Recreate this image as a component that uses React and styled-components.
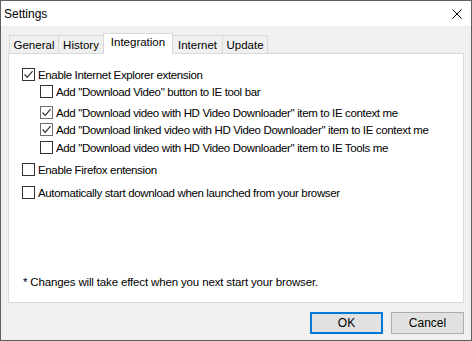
import React, { useState } from "react";
import styled, { createGlobalStyle } from "styled-components";

const GlobalStyle = createGlobalStyle`
  html, body {
    margin: 0;
    padding: 0;
    background: #f0f0f0;
  }
  * {
    box-sizing: border-box;
  }
`;

const Window = styled.div`
  width: 472px;
  height: 341px;
  border: 1px solid #5f5f5f;
  display: flex;
  flex-direction: column;
  font-family: "Liberation Sans", Arial, sans-serif;
  font-size: 11.5px;
  letter-spacing: -0.35px;
  color: #000;
  background: #f0f0f0;
`;

const TitleBar = styled.div`
  height: 25px;
  background: #fff;
  display: flex;
  align-items: center;
  justify-content: space-between;
  padding: 0 9px 0 3px;
  font-size: 12px;
  letter-spacing: 0;
`;

const Body = styled.div`
  flex: 1;
  display: flex;
  flex-direction: column;
  padding: 7px 7px 0 7px;
`;

const TabRow = styled.div`
  display: flex;
  align-items: flex-end;
  height: 20px;
  padding-left: 1px;
  position: relative;
  z-index: 1;
`;

const Tab = styled.div`
  width: ${(p) => p.$w}px;
  height: ${(p) => (p.$active ? 21 : 18)}px;
  margin-left: -1px;
  margin-bottom: ${(p) => (p.$active ? -1 : 0)}px;
  border: 1px solid #d9d9d9;
  border-bottom: none;
  background: ${(p) => (p.$active ? "#fff" : "#f0f0f0")};
  display: flex;
  align-items: ${(p) => (p.$active ? "flex-start" : "center")};
  padding-top: ${(p) => (p.$active ? 2 : 0)}px;
  justify-content: center;
  letter-spacing: 0;
  cursor: default;
  &:first-child {
    margin-left: 0;
  }
`;

const Panel = styled.div`
  height: 250px;
  background: #fff;
  border: 1px solid #d9d9d9;
  display: flex;
  flex-direction: column;
  padding: 12px 13px 12px 13px;
`;

const Row = styled.label`
  display: flex;
  align-items: center;
  height: 17px;
  margin-top: ${(p) => p.$gap || 0}px;
  padding-left: ${(p) => (p.$sub ? 18 : 0)}px;
  white-space: nowrap;
`;

const Box = styled.span`
  width: 13px;
  height: 13px;
  border: 1px solid ${(p) => (p.$soft ? "#6e6e6e" : "#333")};
  background: #fff;
  margin-right: 3px;
  display: flex;
  align-items: center;
  justify-content: center;
  flex-shrink: 0;
`;

const Note = styled.div`
  margin-top: auto;
  height: 17px;
  display: flex;
  align-items: center;
  padding-left: 1px;
  letter-spacing: -0.15px;
`;

const Footer = styled.div`
  display: flex;
  justify-content: flex-end;
  gap: 8px;
  padding-top: 9px;
`;

const Button = styled.button`
  width: ${(p) => p.$w}px;
  height: 22px;
  background: #e1e1e1;
  border: ${(p) => (p.$primary ? "2px solid #0078d7" : "1px solid #adadad")};
  font-family: inherit;
  font-size: 12px;
  color: #000;
  padding: 0;
`;

const Check = ({ checked, soft }) => (
  <Box $soft={soft}>
    {checked && (
      <svg width="11" height="11" viewBox="0 0 11 11">
        <path d="M1.5 5.5 L4.2 8.3 L9.6 2.2" fill="none" stroke="#333" strokeWidth="1.2" />
      </svg>
    )}
  </Box>
);

const tabs = [
  { name: "General", w: 50 },
  { name: "History", w: 46 },
  { name: "Integration", w: 70 },
  { name: "Internet", w: 51 },
  { name: "Update", w: 46 },
];

const App = () => {
  const [active] = useState("Integration");

  return (
    <>
      <GlobalStyle />
      <Window>
        <TitleBar>
          <span>Settings</span>
          <svg width="10" height="10" viewBox="0 0 10 10">
            <path d="M0.5 0.5 L9.5 9.5 M9.5 0.5 L0.5 9.5" stroke="#000" strokeWidth="1" />
          </svg>
        </TitleBar>
        <Body>
          <TabRow>
            {tabs.map((t) => (
              <Tab key={t.name} $w={t.w} $active={t.name === active}>
                {t.name}
              </Tab>
            ))}
          </TabRow>
          <Panel>
            <Row>
              <Check checked />
              Enable Internet Explorer extension
            </Row>
            <Row $sub>
              <Check />
              Add "Download Video" button to IE tool bar
            </Row>
            <Row $sub $gap={4}>
              <Check checked soft />
              Add "Download video with HD Video Downloader" item to IE context me
            </Row>
            <Row $sub>
              <Check checked soft />
              Add "Download linked video with HD Video Downloader" item to IE context me
            </Row>
            <Row $sub $gap={1}>
              <Check />
              Add "Download video with HD Video Downloader" item to IE Tools me
            </Row>
            <Row $gap={5}>
              <Check />
              Enable Firefox entension
            </Row>
            <Row $gap={6}>
              <Check />
              Automatically start download when launched from your browser
            </Row>
            <Note>* Changes will take effect when you next start your browser.</Note>
          </Panel>
          <Footer>
            <Button $w={73} $primary>OK</Button>
            <Button $w={73}>Cancel</Button>
          </Footer>
        </Body>
      </Window>
    </>
  );
};

export default App;
